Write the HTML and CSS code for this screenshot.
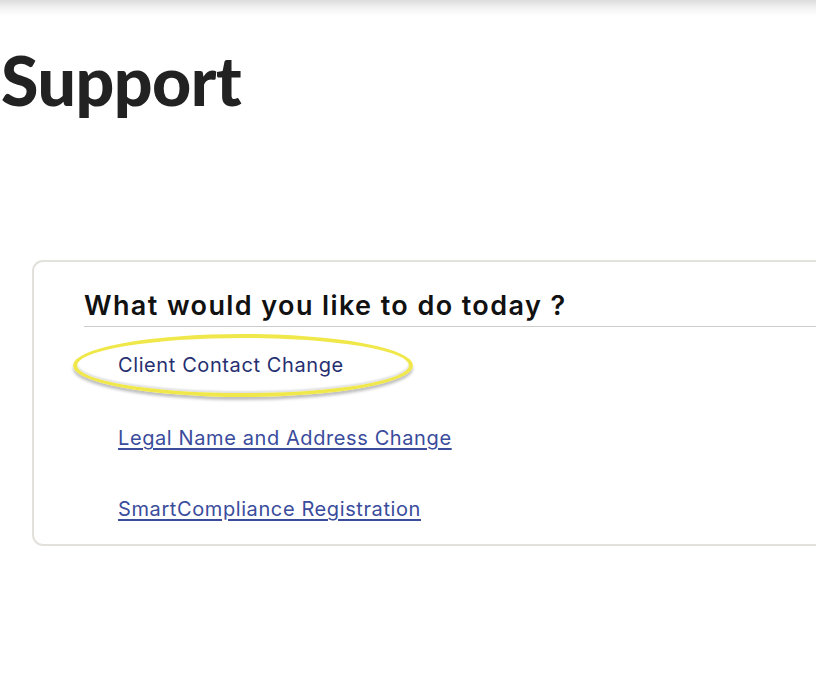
FILE: index.html
```html
<!DOCTYPE html>
<html>
<head>
<meta charset="utf-8">
<link rel="stylesheet" href="styles.css">
</head>
<body>
<div class="topbar"></div>
<h1 class="title">Support</h1>
<div class="card">
  <h2 class="card-title">What would you like to do today ?</h2>
  <ul class="links">
    <li class="link-item highlighted">
      <a class="link visited" href="#">Client Contact Change</a>
      <span class="ring"></span>
    </li>
    <li class="link-item"><a class="link underline" href="#">Legal Name and Address Change</a></li>
    <li class="link-item"><a class="link underline" href="#">SmartCompliance Registration</a></li>
  </ul>
</div>
</body>
</html>
```
FILE: styles.css
```css
html, body {
  margin: 0;
  padding: 0;
  overflow: hidden;
  background: #ffffff;
}
body {
  width: 816px;
  height: 680px;
  font-family: "Inter", "Liberation Sans", sans-serif;
}
.topbar {
  height: 16px;
  background: linear-gradient(to bottom, #dcdcdc 0%, #f3f3f3 50%, #ffffff 100%);
}
.title {
  margin: 24px 0 0 1px;
  font-family: "Lato", sans-serif;
  font-weight: 900;
  font-size: 68px;
  line-height: 80px;
  color: #222222;
  letter-spacing: -0.5px;
}
.card {
  margin: 140px 0 0 32px;
  width: 860px;
  border: 2.5px solid #e3e1dc;
  border-radius: 11px;
  padding: 26px 0 0 50px;
  box-sizing: border-box;
}
.card-title {
  margin: 0;
  font-weight: 600;
  font-size: 27px;
  line-height: 36px;
  letter-spacing: 1.4px;
  color: #111111;
  border-bottom: 1px solid #cccccc;
  padding-bottom: 2px;
}
.links {
  list-style: none;
  margin: 0;
  padding: 3px 0 0 34px;
}
.link-item {
  position: relative;
  height: 72px;
  display: flex;
  align-items: center;
}
.link-item:first-child {
  height: 74px;
  margin-top: -2px;
}
.link-item:last-child {
  height: 70px;
}
.link {
  font-size: 20px;
  line-height: 28px;
  letter-spacing: 0.6px;
  text-decoration: none;
  position: relative;
  z-index: 1;
}
.link.visited {
  color: #262f70;
}
.link.underline {
  color: #3a4c9c;
  text-decoration: underline;
  text-underline-offset: 3px;
  text-decoration-thickness: 1.5px;
}
.ring {
  position: absolute;
  left: -45px;
  top: 6px;
  width: 332px;
  height: 55px;
  border: 4px solid #f0e84a;
  border-radius: 50%;
  box-shadow: 0 3px 3px rgba(0,0,0,0.25), inset 0 -2px 2px rgba(0,0,0,0.12);
}
```
